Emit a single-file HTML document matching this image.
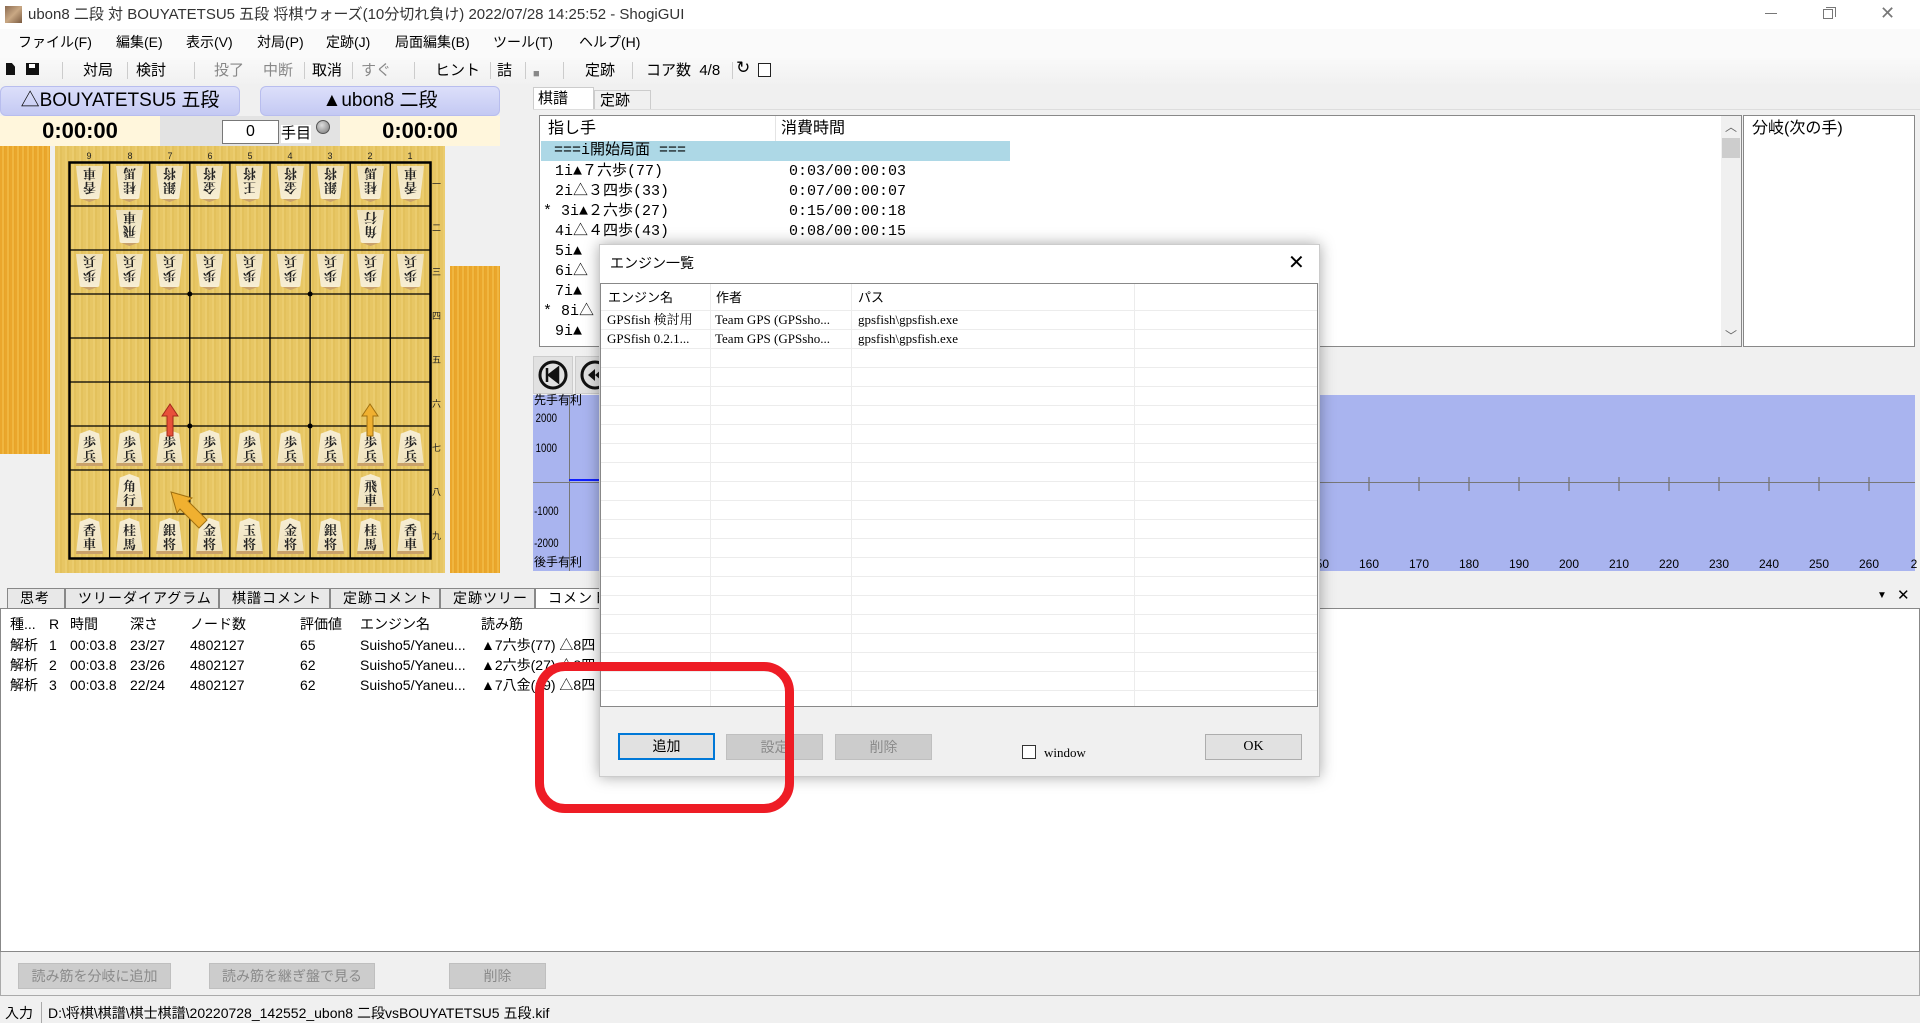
<!DOCTYPE html>
<html><head><meta charset="utf-8"><style>
*{margin:0;padding:0;box-sizing:border-box}
body{width:1920px;height:1023px;overflow:hidden;background:#f0f0f0;font-family:"Liberation Sans","Noto Sans CJK JP",sans-serif;font-size:14px;color:#000;position:relative}
.a{position:absolute;white-space:nowrap}
.tb span{position:absolute;top:62px;font-size:15px;line-height:18px}
.mn span{position:absolute;top:33px;font-size:14px;line-height:18px}
.p{position:absolute;width:27px;height:36px;background:linear-gradient(#f7eed4,#efe2bd);clip-path:polygon(50% 0,86% 10%,100% 100%,0 100%,14% 10%);font:bold 13px/14px "Noto Serif CJK SC","Noto Sans CJK JP",serif;text-align:center;padding-top:5px;color:#222;border-bottom:3px solid #c9a16a}
.g{transform:rotate(180deg);border-bottom:none;border-top:3px solid #c9a16a;padding-top:4px}
.kr{position:absolute;left:555px;font-family:"Liberation Mono","Noto Sans CJK JP",monospace;font-size:15px;line-height:20px;height:20px;white-space:nowrap}
.kt{position:absolute;left:789px;font-family:"Liberation Mono",monospace;font-size:15px;line-height:20px;height:20px}
.btn{position:absolute;background:#cccccc;border:1px solid #bfbfbf;color:#8a8a8a;text-align:center;font-size:14px}
.tab{position:absolute;top:588px;height:20px;border:1px solid #888;border-bottom:none;background:#e8e8e8;font-size:14px;line-height:18px;padding-left:12px;letter-spacing:1px;white-space:nowrap;overflow:hidden}
.gl{position:absolute;font-family:"Liberation Sans",sans-serif;font-size:12px;transform:scaleX(.8)}
.dl{position:absolute;height:1px;background:#ececec;left:0;right:0}
.dv{position:absolute;width:1px;background:#ececec;top:0;bottom:0}
.r{position:absolute;line-height:18px}
</style></head><body>
<div class="a" style="left:0;top:0;width:1920px;height:29px;background:#fff"></div>
<div class="a" style="left:5px;top:6px;width:17px;height:17px;background:linear-gradient(135deg,#8a6a50,#c9a884,#7a5a40)"></div>
<div class="a" style="left:28px;top:6px;font-size:15px;color:#333;line-height:18px">ubon8 二段 対 BOUYATETSU5 五段 将棋ウォーズ(10分切れ負け) 2022/07/28 14:25:52 - ShogiGUI</div>
<div class="a" style="left:1765px;top:13px;width:12px;height:1px;background:#777"></div>
<div class="a" style="left:1823px;top:9px;width:10px;height:10px;border:1px solid #777"></div>
<div class="a" style="left:1826px;top:7px;width:10px;height:10px;border-top:1px solid #777;border-right:1px solid #777"></div>
<div class="a" style="left:1880px;top:3px;font-size:18px;color:#777">✕</div>
<div class="a" style="left:0;top:29px;width:1920px;height:27px;background:#fafafa"></div>
<div class="mn"><span style="left:18px">ファイル(F)</span><span style="left:116px">編集(E)</span><span style="left:186px">表示(V)</span><span style="left:257px">対局(P)</span><span style="left:326px">定跡(J)</span><span style="left:395px">局面編集(B)</span><span style="left:493px">ツール(T)</span><span style="left:579px">ヘルプ(H)</span></div>
<div class="a" style="left:0;top:56px;width:1920px;height:28px;background:linear-gradient(#fafafa,#f1f1f1)"></div>
<div class="a" style="left:6px;top:63px;width:9px;height:12px;background:#111;clip-path:polygon(0 0,65% 0,100% 30%,100% 100%,0 100%)"></div>
<div class="a" style="left:26px;top:63px;width:13px;height:12px;background:#111"></div>
<div class="a" style="left:29px;top:64px;width:6px;height:4px;background:#fff"></div>
<div class="tb"><span style="left:83px">対局</span><span style="left:136px">検討</span><span style="left:214px;color:#888">投了</span><span style="left:263px;color:#888">中断</span><span style="left:312px">取消</span><span style="left:361px;color:#888">すぐ</span><span style="left:435px">ヒント</span><span style="left:497px">詰</span><span style="left:533px;color:#888;font-size:11px;top:65px">■</span><span style="left:585px">定跡</span><span style="left:646px">コア数&nbsp; 4/8</span><span style="left:736px;font-size:17px;top:59px">↻</span></div>
<div class="a" style="left:758px;top:63px;width:13px;height:14px;border:1px solid #222;background:#fff"></div>
<div class="a" style="left:62px;top:62px;width:1px;height:17px;background:#ccc"></div>
<div class="a" style="left:127px;top:62px;width:1px;height:17px;background:#ccc"></div>
<div class="a" style="left:194px;top:62px;width:1px;height:17px;background:#ccc"></div>
<div class="a" style="left:304px;top:62px;width:1px;height:17px;background:#ccc"></div>
<div class="a" style="left:352px;top:62px;width:1px;height:17px;background:#ccc"></div>
<div class="a" style="left:414px;top:62px;width:1px;height:17px;background:#ccc"></div>
<div class="a" style="left:490px;top:62px;width:1px;height:17px;background:#ccc"></div>
<div class="a" style="left:525px;top:62px;width:1px;height:17px;background:#ccc"></div>
<div class="a" style="left:563px;top:62px;width:1px;height:17px;background:#ccc"></div>
<div class="a" style="left:632px;top:62px;width:1px;height:17px;background:#ccc"></div>
<div class="a" style="left:732px;top:62px;width:1px;height:17px;background:#ccc"></div>
<div class="a" style="left:0;top:86px;width:240px;height:30px;background:linear-gradient(#dcdffa,#c4c9f3);border:1px solid #b8bdee;border-radius:6px;text-align:center;font-size:19px;line-height:28px">△BOUYATETSU5 五段</div>
<div class="a" style="left:260px;top:86px;width:240px;height:30px;background:linear-gradient(#dcdffa,#c4c9f3);border:1px solid #b8bdee;border-radius:6px;text-align:center;font-size:19px;line-height:28px">▲ubon8 二段</div>
<div class="a" style="left:0;top:116px;width:160px;height:30px;background:#fff6dc;text-align:center;font:bold 22px/30px 'Liberation Sans',sans-serif">0:00:00</div>
<div class="a" style="left:160px;top:116px;width:180px;height:30px;background:#e3e3e3"></div>
<div class="a" style="left:340px;top:116px;width:160px;height:30px;background:#fff6dc;text-align:center;font:bold 22px/30px 'Liberation Sans',sans-serif">0:00:00</div>
<div class="a" style="left:222px;top:120px;width:57px;height:24px;background:#fff;border:1px solid #777;text-align:center;font-size:16px;line-height:22px">0</div>
<div class="a" style="left:281px;top:125px;background:#fff;font-size:15px;line-height:18px">手目</div>
<div class="a" style="left:316px;top:120px;width:14px;height:14px;border-radius:50%;background:radial-gradient(circle at 40% 35%,#ddd,#777);border:1px solid #555"></div>
<div class="a" style="left:0;top:146px;width:50px;height:308px;background:repeating-linear-gradient(90deg,#eaa62c 0 2px,#f0b640 2px 4px,#e8a428 4px 5px)"></div>
<div class="a" style="left:450px;top:266px;width:50px;height:307px;background:repeating-linear-gradient(90deg,#eaa62c 0 2px,#f0b640 2px 4px,#e8a428 4px 5px)"></div>
<div class="a" style="left:55px;top:146px;width:390px;height:427px;background:repeating-linear-gradient(90deg,#e7c664 0 3px,#ebcc6e 3px 5px,#e3c15c 5px 7px)"></div>
<svg class="a" style="left:0;top:0" width="520" height="580">
<g stroke="#000" stroke-width="1.3" fill="none">
<rect x="69.5" y="162.5" width="361" height="396" stroke-width="2.5"/>
<path d="M109.6 162V558M149.7 162V558M189.8 162V558M229.9 162V558M270 162V558M310.1 162V558M350.2 162V558M390.3 162V558M69 206H430M69 250H430M69 294H430M69 338H430M69 382H430M69 426H430M69 470H430M69 514H430"/>
</g>
<g fill="#000"><circle cx="189.8" cy="294" r="2.5"/><circle cx="310.1" cy="294" r="2.5"/><circle cx="189.8" cy="426" r="2.5"/><circle cx="310.1" cy="426" r="2.5"/></g>
<g font-size="9" font-family="Liberation Sans" text-anchor="middle" fill="#222"><text x="89" y="159">9</text><text x="130" y="159">8</text><text x="170" y="159">7</text><text x="210" y="159">6</text><text x="250" y="159">5</text><text x="290" y="159">4</text><text x="330" y="159">3</text><text x="370" y="159">2</text><text x="410" y="159">1</text></g>
<g font-size="9" font-family="Noto Sans CJK JP" fill="#222"><text x="432" y="187">一</text><text x="432" y="231">二</text><text x="432" y="275">三</text><text x="432" y="319">四</text><text x="432" y="363">五</text><text x="432" y="407">六</text><text x="432" y="451">七</text><text x="432" y="495">八</text><text x="432" y="539">九</text></g>
</svg>
<div class="p g" style="left:76px;top:166px">香<br>車</div><div class="p g" style="left:116px;top:166px">桂<br>馬</div><div class="p g" style="left:156px;top:166px">銀<br>将</div><div class="p g" style="left:196px;top:166px">金<br>将</div><div class="p g" style="left:236px;top:166px">王<br>将</div><div class="p g" style="left:277px;top:166px">金<br>将</div><div class="p g" style="left:317px;top:166px">銀<br>将</div><div class="p g" style="left:357px;top:166px">桂<br>馬</div><div class="p g" style="left:397px;top:166px">香<br>車</div>
<div class="p g" style="left:116px;top:210px">飛<br>車</div><div class="p g" style="left:357px;top:210px">角<br>行</div>
<div class="p g" style="left:76px;top:254px">歩<br>兵</div><div class="p g" style="left:116px;top:254px">歩<br>兵</div><div class="p g" style="left:156px;top:254px">歩<br>兵</div><div class="p g" style="left:196px;top:254px">歩<br>兵</div><div class="p g" style="left:236px;top:254px">歩<br>兵</div><div class="p g" style="left:277px;top:254px">歩<br>兵</div><div class="p g" style="left:317px;top:254px">歩<br>兵</div><div class="p g" style="left:357px;top:254px">歩<br>兵</div><div class="p g" style="left:397px;top:254px">歩<br>兵</div>
<div class="p" style="left:76px;top:430px">歩<br>兵</div><div class="p" style="left:116px;top:430px">歩<br>兵</div><div class="p" style="left:156px;top:430px">歩<br>兵</div><div class="p" style="left:196px;top:430px">歩<br>兵</div><div class="p" style="left:236px;top:430px">歩<br>兵</div><div class="p" style="left:277px;top:430px">歩<br>兵</div><div class="p" style="left:317px;top:430px">歩<br>兵</div><div class="p" style="left:357px;top:430px">歩<br>兵</div><div class="p" style="left:397px;top:430px">歩<br>兵</div>
<div class="p" style="left:116px;top:474px">角<br>行</div><div class="p" style="left:357px;top:474px">飛<br>車</div>
<div class="p" style="left:76px;top:518px">香<br>車</div><div class="p" style="left:116px;top:518px">桂<br>馬</div><div class="p" style="left:156px;top:518px">銀<br>将</div><div class="p" style="left:196px;top:518px">金<br>将</div><div class="p" style="left:236px;top:518px">玉<br>将</div><div class="p" style="left:277px;top:518px">金<br>将</div><div class="p" style="left:317px;top:518px">銀<br>将</div><div class="p" style="left:357px;top:518px">桂<br>馬</div><div class="p" style="left:397px;top:518px">香<br>車</div>
<svg class="a" style="left:0;top:0" width="520" height="580">
<path d="M167 436V416H162L170 404L178 416H173V436Z" fill="#e8503a" stroke="#a02a1a"/>
<path d="M367 436V416H362L370 404L378 416H373V436Z" fill="#f0b030" stroke="#a07010"/>
<path d="M199 528L180 509L177 513L171 492L192 498L188 501L207 520Z" fill="#f0b030" stroke="#a07010"/>
</svg>
<div class="a" style="left:533px;top:87px;width:61px;height:23px;background:#fff;border:1px solid #ccc;border-bottom:none;padding:2px 4px;font-size:15px;line-height:18px">棋譜</div>
<div class="a" style="left:594px;top:90px;width:57px;height:20px;background:#f0f0f0;border:1px solid #ccc;padding:1px 5px;font-size:15px;line-height:18px">定跡</div>
<div class="a" style="left:533px;top:109px;width:1387px;height:1px;background:#ddd"></div>
<div class="a" style="left:539px;top:115px;width:1203px;height:232px;background:#fff;border:1px solid #888"></div>
<div class="a" style="left:540px;top:116px;width:236px;height:25px;border-right:1px solid #e4e4e4;padding:3px 8px;font-size:16px;line-height:19px">指し手</div>
<div class="a" style="left:777px;top:116px;width:233px;height:25px;padding:3px 4px;font-size:16px;line-height:19px">消費時間</div>
<div class="a" style="left:541px;top:141px;width:469px;height:20px;background:#add8e6;font-family:'Liberation Mono','Noto Sans CJK JP',monospace;font-size:15px;padding-left:13px;line-height:20px">===i開始局面 ===</div>
<div class="kr" style="top:162px">1i▲７六歩(77)</div><div class="kt" style="top:162px">0:03/00:00:03</div>
<div class="kr" style="top:182px">2i△３四歩(33)</div><div class="kt" style="top:182px">0:07/00:00:07</div>
<div class="kr" style="top:202px;left:543px">* 3i▲２六歩(27)</div><div class="kt" style="top:202px">0:15/00:00:18</div>
<div class="kr" style="top:222px">4i△４四歩(43)</div><div class="kt" style="top:222px">0:08/00:00:15</div>
<div class="kr" style="top:242px">5i▲</div><div class="kr" style="top:262px">6i△</div><div class="kr" style="top:282px">7i▲</div><div class="kr" style="top:302px;left:543px">* 8i△</div><div class="kr" style="top:322px">9i▲</div>
<div class="a" style="left:1721px;top:116px;width:20px;height:230px;background:#f0f0f0"></div>
<div class="a" style="left:1722px;top:138px;width:18px;height:20px;background:#cdcdcd"></div>
<div class="a" style="left:1725px;top:118px;font-size:12px;color:#666">︿</div>
<div class="a" style="left:1725px;top:327px;font-size:12px;color:#666">﹀</div>
<div class="a" style="left:1743px;top:115px;width:172px;height:232px;background:#fff;border:1px solid #888;padding:3px 8px;font-size:16px;line-height:19px">分岐(次の手)</div>
<div class="a" style="left:533px;top:356px;width:40px;height:38px;background:#e1e1e1;border:1px solid #ccc"></div>
<div class="a" style="left:575px;top:356px;width:40px;height:38px;background:#e1e1e1;border:1px solid #ccc"></div>
<svg class="a" style="left:533px;top:356px" width="90" height="38"><circle cx="20" cy="19" r="13" fill="none" stroke="#111" stroke-width="3"/><path d="M14 12V26M16 19L25 12V26Z" stroke="#111" stroke-width="2.5" fill="#111"/><circle cx="62" cy="19" r="13" fill="none" stroke="#111" stroke-width="3"/><path d="M55 19L62 13V25ZM62 19L69 13V25Z" fill="#111"/></svg>
<div class="a" style="left:533px;top:395px;width:1382px;height:176px;background:#a9b4ef"></div>
<div class="a" style="left:569px;top:395px;width:1px;height:176px;background:#777"></div>
<div class="a" style="left:533px;top:482px;width:1382px;height:1px;background:#777"></div>
<div class="a" style="left:569px;top:479px;width:32px;height:2px;background:#1020ff"></div>
<div class="a" style="left:534px;top:393px;font-size:12px;line-height:15px">先手有利</div>
<div class="gl" style="left:533px;top:411px">2000</div><div class="gl" style="left:533px;top:441px">1000</div><div class="gl" style="left:531px;top:504px">-1000</div><div class="gl" style="left:531px;top:536px">-2000</div>
<div class="a" style="left:534px;top:555px;font-size:12px;line-height:15px">後手有利</div>
<svg class="a" style="left:1300px;top:470px" width="620" height="100"><path d="M19 7V21M69 7V21M119 7V21M169 7V21M219 7V21M269 7V21M319 7V21M369 7V21M419 7V21M469 7V21M519 7V21M569 7V21" stroke="#777" stroke-width="1.3"/>
<g font-size="12" font-family="Liberation Sans" text-anchor="middle"><text x="19" y="98">150</text><text x="69" y="98">160</text><text x="119" y="98">170</text><text x="169" y="98">180</text><text x="219" y="98">190</text><text x="269" y="98">200</text><text x="319" y="98">210</text><text x="369" y="98">220</text><text x="419" y="98">230</text><text x="469" y="98">240</text><text x="519" y="98">250</text><text x="569" y="98">260</text><text x="614" y="98">2</text></g></svg>
<div class="tab" style="left:7px;width:58px">思考</div>
<div class="tab" style="left:65px;width:154px">ツリーダイアグラム</div>
<div class="tab" style="left:219px;width:111px">棋譜コメント</div>
<div class="tab" style="left:330px;width:110px">定跡コメント</div>
<div class="tab" style="left:440px;width:95px">定跡ツリー</div>
<div class="tab" style="left:535px;width:80px;background:#fff">コメント</div>
<div class="a" style="left:1877px;top:590px;font-size:10px">▼</div>
<div class="a" style="left:1897px;top:586px;font-size:15px">✕</div>
<div class="a" style="left:0;top:608px;width:1920px;height:344px;background:#fff;border:1px solid #888"></div>
<div class="r" style="left:10px;top:615px">種...</div><div class="r" style="left:49px;top:615px">R</div><div class="r" style="left:70px;top:615px">時間</div><div class="r" style="left:130px;top:615px">深さ</div><div class="r" style="left:190px;top:615px">ノード数</div><div class="r" style="left:300px;top:615px">評価値</div><div class="r" style="left:360px;top:615px">エンジン名</div><div class="r" style="left:481px;top:615px">読み筋</div>
<div class="r" style="left:10px;top:636px">解析</div><div class="r" style="left:49px;top:636px">1</div><div class="r" style="left:70px;top:636px">00:03.8</div><div class="r" style="left:130px;top:636px">23/27</div><div class="r" style="left:190px;top:636px">4802127</div><div class="r" style="left:300px;top:636px">65</div><div class="r" style="left:360px;top:636px">Suisho5/Yaneu...</div><div class="r" style="left:481px;top:636px;white-space:nowrap">▲7六歩(77) △8四</div>
<div class="r" style="left:10px;top:656px">解析</div><div class="r" style="left:49px;top:656px">2</div><div class="r" style="left:70px;top:656px">00:03.8</div><div class="r" style="left:130px;top:656px">23/26</div><div class="r" style="left:190px;top:656px">4802127</div><div class="r" style="left:300px;top:656px">62</div><div class="r" style="left:360px;top:656px">Suisho5/Yaneu...</div><div class="r" style="left:481px;top:656px;white-space:nowrap">▲2六歩(27) △8四</div>
<div class="r" style="left:10px;top:676px">解析</div><div class="r" style="left:49px;top:676px">3</div><div class="r" style="left:70px;top:676px">00:03.8</div><div class="r" style="left:130px;top:676px">22/24</div><div class="r" style="left:190px;top:676px">4802127</div><div class="r" style="left:300px;top:676px">62</div><div class="r" style="left:360px;top:676px">Suisho5/Yaneu...</div><div class="r" style="left:481px;top:676px;white-space:nowrap">▲7八金(69) △8四</div>
<div class="a" style="left:0;top:952px;width:1920px;height:44px;border:1px solid #aaa;border-top:none;background:#f0f0f0"></div>
<div class="btn" style="left:18px;top:963px;width:153px;height:26px;line-height:24px">読み筋を分岐に追加</div>
<div class="btn" style="left:209px;top:963px;width:166px;height:26px;line-height:24px">読み筋を継ぎ盤で見る</div>
<div class="btn" style="left:449px;top:963px;width:97px;height:26px;line-height:24px">削除</div>
<div class="a" style="left:5px;top:1005px;font-size:14px;line-height:17px">入力</div>
<div class="a" style="left:41px;top:1002px;width:1px;height:21px;background:#aaa"></div>
<div class="a" style="left:48px;top:1005px;font-size:14px;line-height:17px">D:\将棋\棋譜\棋士棋譜\20220728_142552_ubon8 二段vsBOUYATETSU5 五段.kif</div>
<div class="a" style="left:599px;top:244px;width:721px;height:533px;background:#f0f0f0;box-shadow:0 0 14px rgba(0,0,0,.35);border:1px solid #ccc">
<div class="a" style="left:0;top:0;width:719px;height:38px;background:#fff"></div>
<div class="a" style="left:10px;top:10px;font-size:14px;line-height:17px">エンジン一覧</div>
<div class="a" style="left:688px;top:5px;font-size:20px;font-weight:100">✕</div>
<div class="a" style="left:0;top:38px;width:718px;height:424px;background:#fff;border:1px solid #888;overflow:hidden;font-family:'Liberation Serif','Noto Serif CJK SC',serif;font-size:13px">
<div class="dv" style="left:109px"></div><div class="dv" style="left:250px"></div><div class="dv" style="left:533px"></div>
<div class="dl" style="top:26px"></div><div class="dl" style="top:45px"></div><div class="dl" style="top:64px"></div><div class="dl" style="top:83px"></div><div class="dl" style="top:102px"></div><div class="dl" style="top:121px"></div><div class="dl" style="top:140px"></div><div class="dl" style="top:159px"></div><div class="dl" style="top:178px"></div><div class="dl" style="top:197px"></div><div class="dl" style="top:216px"></div><div class="dl" style="top:235px"></div><div class="dl" style="top:254px"></div><div class="dl" style="top:273px"></div><div class="dl" style="top:292px"></div><div class="dl" style="top:311px"></div><div class="dl" style="top:330px"></div><div class="dl" style="top:349px"></div><div class="dl" style="top:368px"></div><div class="dl" style="top:387px"></div><div class="dl" style="top:406px"></div>
<div class="r" style="left:7px;top:4px;font-family:'Noto Sans CJK JP',sans-serif">エンジン名</div><div class="r" style="left:115px;top:4px;font-family:'Noto Sans CJK JP',sans-serif">作者</div><div class="r" style="left:257px;top:4px;font-family:'Noto Sans CJK JP',sans-serif">パス</div>
<div class="r" style="left:6px;top:27px">GPSfish 検討用</div><div class="r" style="left:114px;top:27px">Team GPS (GPSsho...</div><div class="r" style="left:257px;top:27px">gpsfish\gpsfish.exe</div>
<div class="r" style="left:6px;top:46px">GPSfish 0.2.1...</div><div class="r" style="left:114px;top:46px">Team GPS (GPSsho...</div><div class="r" style="left:257px;top:46px">gpsfish\gpsfish.exe</div>
</div>
<div class="a" style="left:18px;top:488px;width:97px;height:27px;background:#e1e1e1;border:2px solid #0078d7;text-align:center;line-height:23px;font-size:14px">追加</div>
<div class="btn" style="left:126px;top:489px;width:97px;height:26px;line-height:24px">設定</div>
<div class="btn" style="left:235px;top:489px;width:97px;height:26px;line-height:24px">削除</div>
<div class="a" style="left:422px;top:500px;width:14px;height:14px;border:1px solid #333;background:#fff"></div>
<div class="a" style="left:444px;top:500px;font-family:'Liberation Serif',serif;font-size:13px;line-height:16px">window</div>
<div class="a" style="left:605px;top:489px;width:97px;height:26px;background:#e1e1e1;border:1px solid #adadad;text-align:center;line-height:24px;font-family:'Liberation Serif',serif;font-size:14px">OK</div>
</div>
<div class="a" style="left:535px;top:662px;width:259px;height:151px;border:9px solid #ee1c25;border-radius:30px"></div>
</body></html>
